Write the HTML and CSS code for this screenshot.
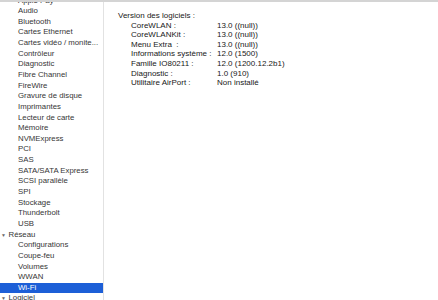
FILE: index.html
```html
<!DOCTYPE html>
<html lang="fr">
<head>
    <meta charset="UTF-8">
    <title>Informations système</title>
    <link rel="stylesheet" href="styles.css">
</head>
<body>
    <div class="fenetre">
        <aside class="barre">
            <ul class="liste">
                <li class="item">Apple Pay</li>
                <li class="item">Audio</li>
                <li class="item">Bluetooth</li>
                <li class="item">Cartes Ethernet</li>
                <li class="item">Cartes vidéo / monite...</li>
                <li class="item">Contrôleur</li>
                <li class="item">Diagnostic</li>
                <li class="item">Fibre Channel</li>
                <li class="item">FireWire</li>
                <li class="item">Gravure de disque</li>
                <li class="item">Imprimantes</li>
                <li class="item">Lecteur de carte</li>
                <li class="item">Mémoire</li>
                <li class="item">NVMExpress</li>
                <li class="item">PCI</li>
                <li class="item">SAS</li>
                <li class="item">SATA/SATA Express</li>
                <li class="item">SCSI parallèle</li>
                <li class="item">SPI</li>
                <li class="item">Stockage</li>
                <li class="item">Thunderbolt</li>
                <li class="item">USB</li>
                <li class="groupe"><span class="fleche">&#9660;</span>Réseau</li>
                <li class="item">Configurations</li>
                <li class="item">Coupe-feu</li>
                <li class="item">Volumes</li>
                <li class="item">WWAN</li>
                <li class="item actif">Wi-Fi</li>
                <li class="groupe"><span class="fleche">&#9660;</span>Logiciel</li>
            </ul>
        </aside>
        <main class="contenu">
            <div class="titre">Version des logiciels :</div>
            <div class="tableau">
                <span>CoreWLAN :</span><span>13.0 ((null))</span>
                <span>CoreWLANKit :</span><span>13.0 ((null))</span>
                <span>Menu Extra&nbsp; :</span><span>13.0 ((null))</span>
                <span>Informations système :</span><span>12.0 (1500)</span>
                <span>Famille IO80211 :</span><span>12.0 (1200.12.2b1)</span>
                <span>Diagnostic :</span><span>1.0 (910)</span>
                <span>Utilitaire AirPort :</span><span>Non installé</span>
            </div>
        </main>
    </div>
</body>
</html>
```
FILE: styles.css
```css
*{
    box-sizing: border-box;
    margin: 0;
    padding: 0;
}
body{
    width: 438px;
    height: 300px;
    overflow: hidden;
    background-color: #ffffff;
    font-family: "Liberation Sans", Arial, sans-serif;
}
.fenetre{
    height: 300px;
    display: flex;
    border-top: 2px solid #d4d4d4;
}
.barre{
    width: 104px;
    flex-shrink: 0;
    overflow: hidden;
    border-right: 1px solid #e2e2e2;
    background-color: #ffffff;
}
.liste{
    list-style: none;
    margin-top: -6.5px;
}
.item, .groupe{
    height: 10.65px;
    line-height: 10.65px;
    font-size: 7.8px;
    color: #363636;
    white-space: nowrap;
}
.item{
    padding-left: 18px;
}
.groupe{
    padding-left: 1px;
}
.fleche{
    display: inline-block;
    width: 7.5px;
    font-size: 5px;
    color: #6a6a6a;
    vertical-align: top;
}
.actif{
    background-color: #1d5fd7;
    color: #ffffff;
}
.contenu{
    flex: 1;
    padding: 9px 0 0 14px;
    font-size: 8px;
    color: #202020;
    line-height: 9.6px;
}
.tableau{
    display: grid;
    grid-template-columns: 86px auto;
    padding-left: 13px;
}
```
